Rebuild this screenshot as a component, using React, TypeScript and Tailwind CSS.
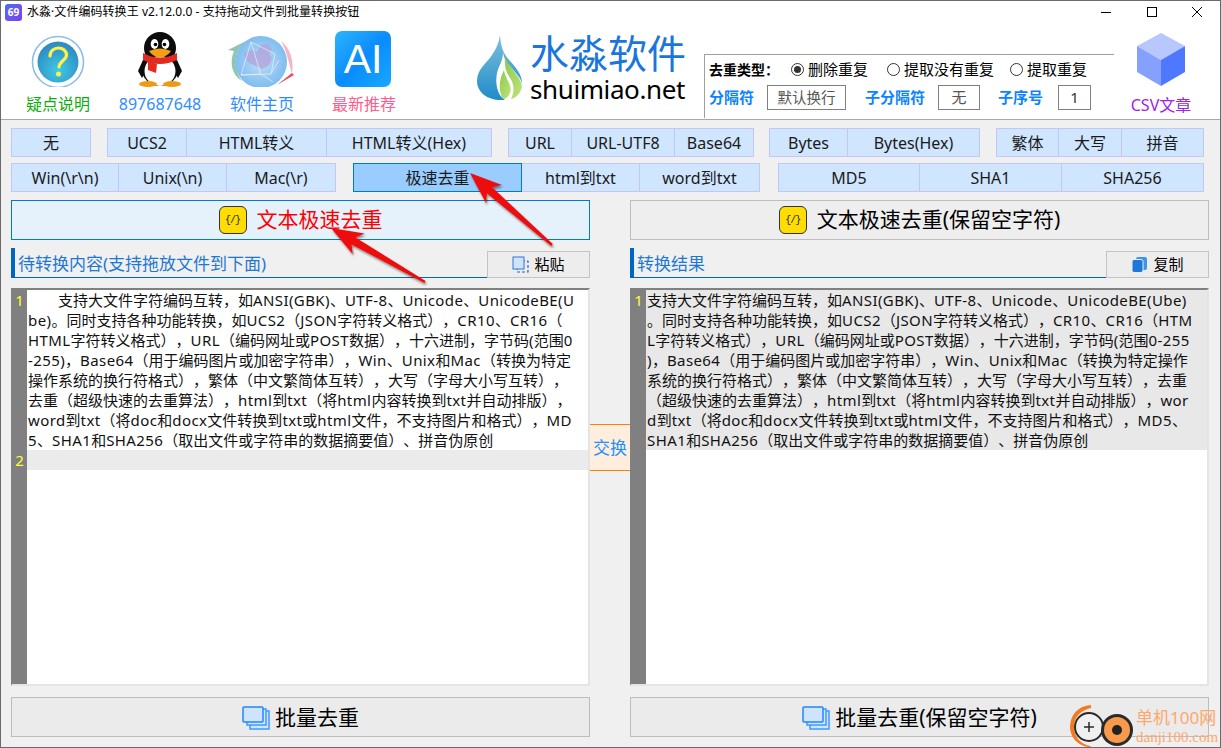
import React from "react";

const leftLines = [
  "\u3000\u3000支持大文件字符编码互转，如ANSI(GBK)、UTF-8、Unicode、UnicodeBE(U",
  "be)。同时支持各种功能转换，如UCS2（JSON字符转义格式），CR10、CR16（",
  "HTML字符转义格式），URL（编码网址或POST数据），十六进制，字节码(范围0",
  "-255)，Base64（用于编码图片或加密字符串），Win、Unix和Mac（转换为特定",
  "操作系统的换行符格式），繁体（中文繁简体互转），大写（字母大小写互转），",
  "去重（超级快速的去重算法），html到txt（将html内容转换到txt并自动排版），",
  "word到txt（将doc和docx文件转换到txt或html文件，不支持图片和格式），MD",
  "5、SHA1和SHA256（取出文件或字符串的数据摘要值）、拼音伪原创",
];
const rightLines = [
  "支持大文件字符编码互转，如ANSI(GBK)、UTF-8、Unicode、UnicodeBE(Ube)",
  "。同时支持各种功能转换，如UCS2（JSON字符转义格式），CR10、CR16（HTM",
  "L字符转义格式），URL（编码网址或POST数据），十六进制，字节码(范围0-255",
  ")，Base64（用于编码图片或加密字符串），Win、Unix和Mac（转换为特定操作",
  "系统的换行符格式），繁体（中文繁简体互转），大写（字母大小写互转），去重",
  "（超级快速的去重算法），html到txt（将html内容转换到txt并自动排版），wor",
  "d到txt（将doc和docx文件转换到txt或html文件，不支持图片和格式），MD5、",
  "SHA1和SHA256（取出文件或字符串的数据摘要值）、拼音伪原创",
];

function Line({ text }: { text: string }) {
  const parts = text.split(/([A-Za-z0-9()\-]+)/);
  return (
    <div className="whitespace-pre h-[20px]">
      {parts.map((p, i) =>
        i % 2 === 1 ? (
          <span key={i} className="tracking-[0.4px]">
            {p}
          </span>
        ) : (
          <span key={i}>{p}</span>
        )
      )}
    </div>
  );
}

function Seg({ label, w, first, active }: { label: string; w: string; first?: boolean; active?: boolean }) {
  return (
    <div
      className={`${w} ${first ? "" : "-ml-px"} ${
        active ? "relative bg-[#99ccff] border-[#0078d7]" : "bg-[#d0e6ff] border-[#c2c6ff]"
      } h-full border flex items-center justify-center text-[16px] text-[#1a1a1a] whitespace-nowrap`}
    >
      {label}
    </div>
  );
}

function HelpIcon() {
  return (
    <svg width="56" height="56" viewBox="0 0 56 56">
      <defs>
        <radialGradient id="hg" cx="50%" cy="70%" r="60%">
          <stop offset="0%" stopColor="#3fc9e4" />
          <stop offset="100%" stopColor="#2f8fc4" />
        </radialGradient>
      </defs>
      <circle cx="28" cy="31" r="25.5" fill="#fff" stroke="#8dbde6" strokeWidth="1.6" />
      <circle cx="28" cy="31" r="20.5" fill="url(#hg)" />
      <path d="M20 25c0-5 4-8 8.500-8s8 3 8 7c0 5-7 6-7.500 12" fill="none" stroke="#fff04a" strokeWidth="3.200" strokeLinecap="round" />
      <circle cx="28.500" cy="43" r="2.500" fill="#fff04a" />
    </svg>
  );
}

function QQIcon() {
  return (
    <svg width="56" height="56" viewBox="0 0 56 56">
      <ellipse cx="28" cy="17" rx="16" ry="16" fill="#0c0c0c" />
      <ellipse cx="28" cy="37" rx="18.500" ry="18" fill="#0c0c0c" />
      <path d="M11 29 L6 40 L10 47 L14 40Z M45 29 L50 40 L46 47 L42 40Z" fill="#0c0c0c" />
      <ellipse cx="28" cy="40" rx="15.500" ry="15" fill="#fff" />
      <ellipse cx="22.500" cy="13" rx="3.800" ry="5" fill="#fff" />
      <ellipse cx="33.500" cy="13" rx="3.800" ry="5" fill="#fff" />
      <circle cx="23.500" cy="13.500" r="1.800" fill="#000" />
      <circle cx="32.500" cy="13.500" r="1.800" fill="#000" />
      <path d="M17 20 Q28 15 39 20 Q35 26 28 26 Q21 26 17 20Z" fill="#f4a010" />
      <path d="M11 22 Q28 31 45 22 L45 29 Q28 37 11 29Z" fill="#e32a1f" />
      <path d="M16 30 L25 33 L24 42 L16 39Z" fill="#e32a1f" />
      <ellipse cx="16" cy="53" rx="9" ry="3" fill="#f09a10" />
      <ellipse cx="40" cy="53" rx="9" ry="3" fill="#f09a10" />
    </svg>
  );
}

function GlobeIcon() {
  return (
    <svg width="70" height="56" viewBox="0 0 70 56">
      <defs>
        <radialGradient id="gg" cx="50%" cy="50%" r="55%">
          <stop offset="0%" stopColor="#c0dcf6" />
          <stop offset="100%" stopColor="#78baf0" />
        </radialGradient>
      </defs>
      <circle cx="34" cy="31" r="26" fill="url(#gg)" />
      <path d="M18 21l7-2 5 2 4-7 7-1 4 5-3 5 3 4-3 7-7 4-6-3-7-3-5-7z" fill="#b3a4dc" opacity="0.8" />
      <path d="M24 11l24 12-4 20-30 1zM14 44l20-1 12 8M44 43l8-14M24 11l10 33" fill="none" stroke="#e6f2fc" strokeWidth="0.700" />
      <path d="M1 19L19 10 14 15C7 22 6 38 15 50 5 44 2 32 7 20Z" fill="#8cc6b0" />
      <path d="M54 10C64 18 67 30 65 43 62 33 60 20 54 10Z" fill="#f4b4c4" />
      <path d="M50 54L67 44 65 42 60 46Z" fill="#e84a60" />
    </svg>
  );
}

function AppBar({ icon, label, labelColor }: { icon: React.ReactNode; label: string; labelColor: string }) {
  return (
    <div className="w-[102px] flex flex-col items-center">
      <div className="h-[56px] mt-[8px] flex items-center justify-center">{icon}</div>
      <div className={`mt-[7px] h-[20px] leading-[20px] text-[16px] whitespace-nowrap ${labelColor}`}>{label}</div>
    </div>
  );
}

function Radio({ on }: { on?: boolean }) {
  return (
    <span className="w-[13px] h-[13px] rounded-full border border-[#333] flex items-center justify-center bg-white">
      {on ? <span className="w-[7px] h-[7px] rounded-full bg-[#333]" /> : null}
    </span>
  );
}

function CodeIcon() {
  return (
    <span className="w-[28px] h-[28px] rounded-[6px] border border-[#333] bg-[#ffdd00] flex items-center justify-center text-[10px] tracking-[-1px] text-[#222] font-['Liberation_Mono',monospace]">
      {"{/}"}
    </span>
  );
}

function StackIcon() {
  return (
    <svg width="28" height="24" viewBox="0 0 28 24">
      <rect x="8" y="5" width="19" height="18" fill="#d3e6ff" stroke="#3d9bff" strokeWidth="1.500" />
      <rect x="5" y="3" width="19" height="16" fill="#d3e6ff" stroke="#3d9bff" strokeWidth="1.500" />
      <rect x="1" y="1" width="20" height="15" rx="1" fill="#cfe3ff" stroke="#1e88ff" strokeWidth="1.500" />
    </svg>
  );
}

function Editor({ lines, left }: { lines: string[]; left?: boolean }) {
  return (
    <div className="w-[579px] h-[398px] border-t-2 border-l border-r-2 border-b-2 border-t-[#808080] border-l-[#808080] border-r-[#e4e4e4] border-b-[#e4e4e4] bg-white flex overflow-hidden">
      <div className="w-[15px] shrink-0 bg-[#808080] text-[#ffff33] text-[15px] leading-[20px] text-center">
        <div>1</div>
        {left ? <div className="mt-[140px]">2</div> : null}
      </div>
      <div className="flex-1 min-w-0 text-[15px] leading-[20px] text-[#111]">
        <div className={left ? "pl-px" : "pl-px bg-[#e8e8e8]"}>
          {lines.map((l) => (
            <Line key={l} text={l} />
          ))}
        </div>
        {left ? <div className="h-[20px] bg-[#ebebeb]" /> : null}
      </div>
    </div>
  );
}

function arrow(tx: number, ty: number, bx: number, by: number) {
  const len = Math.hypot(bx - tx, by - ty);
  const dx = (bx - tx) / len;
  const dy = (by - ty) / len;
  const px = -dy;
  const py = dx;
  const pts: [number, number][] = [
    [tx, ty],
    [tx + dx * 32 + px * 12, ty + dy * 32 + py * 12],
    [tx + dx * 26 + px * 4, ty + dy * 26 + py * 4],
    [bx + px * 1.2, by + py * 1.2],
    [bx - px * 1.2, by - py * 1.2],
    [tx + dx * 26 - px * 4, ty + dy * 26 - py * 4],
    [tx + dx * 32 - px * 12, ty + dy * 32 - py * 12],
  ];
  return pts.map((p) => p.join(",")).join(" ");
}

export default function App() {
  return (
    <div className="relative w-[1221px] h-[748px] overflow-hidden border border-[#6a6a6a] bg-[#f0f0f0] flex flex-col font-['Noto_Sans','Noto_Sans_CJK_SC',sans-serif] text-black [text-spacing-trim:space-all]">
      {/* title + header */}
      <div className="h-[118px] shrink-0 bg-white border-b border-[#a8a8a8] flex flex-col box-content -mb-px">
        <div className="h-[22px] shrink-0 flex items-center pl-[4px]">
          <span className="w-[17px] h-[17px] rounded-[3px] bg-gradient-to-br from-[#4a6cf0] to-[#7a3df0] text-white text-[10px] leading-[17px] text-center font-bold">
            69
          </span>
          <span className="ml-[5px] text-[12px] whitespace-nowrap tracking-[0.05px]">水淼·文件编码转换王 v2.12.0.0 - 支持拖动文件到批量转换按钮</span>
          <div className="ml-auto flex items-center">
            <svg width="12" height="12" viewBox="0 0 12 12" className="mr-[34px]">
              <path d="M1 6.500H11" stroke="#000" strokeWidth="1" />
            </svg>
            <svg width="12" height="12" viewBox="0 0 12 12" className="mr-[33px]">
              <rect x="1.500" y="1.500" width="9" height="9" fill="none" stroke="#000" strokeWidth="1" />
            </svg>
            <svg width="12" height="12" viewBox="0 0 12 12" className="mr-[17px]">
              <path d="M1 1L11 11M11 1L1 11" stroke="#000" strokeWidth="1" />
            </svg>
          </div>
        </div>
        <div className="flex-1 flex pl-[6px]">
          <AppBar icon={<HelpIcon />} label="疑点说明" labelColor="text-[#0cae0c]" />
          <AppBar icon={<QQIcon />} label="897687648" labelColor="text-[#2f8dff]" />
          <AppBar icon={<GlobeIcon />} label="软件主页" labelColor="text-[#2f8dff]" />
          <AppBar
            icon={
              <div className="w-[56px] h-[56px] mr-[2px] rounded-[7px] bg-gradient-to-br from-[#2db4f8] via-[#0a8cff] to-[#1aa8fa] flex items-center justify-center text-white text-[41px] leading-none font-['Liberation_Sans',sans-serif]">
                AI
              </div>
            }
            label="最新推荐"
            labelColor="text-[#ff5c8a]"
          />
          <svg width="46" height="66" viewBox="0 0 46 66" className="ml-[62px] mt-[12px] shrink-0">
            <defs>
              <linearGradient id="db" x1="0" y1="0" x2="0" y2="1">
                <stop offset="0%" stopColor="#7cc0dc" />
                <stop offset="100%" stopColor="#1f8cc8" />
              </linearGradient>
              <linearGradient id="dg" x1="0" y1="0" x2="1" y2="1">
                <stop offset="0%" stopColor="#8cc84c" />
                <stop offset="100%" stopColor="#c0e47c" />
              </linearGradient>
            </defs>
            <path d="M23 0C24 14 27 19 33 26 40 33 46 42 45 50 44 59 35 65 24 65 10 65 0 57 0 46 0 34 10 28 15 20 19 14 22 8 23 0Z" fill="url(#db)" />
            <path d="M26 17C27 26 33 31 38 37 43 43 46 47 45 52 44 60 36 65 28 65 20 60 18 48 20 38 22 30 26 26 26 17Z" fill="#fff" />
            <path d="M28 20C29 28 34 32 39 39 44 46 46 50 44 55 42 60 38 63 34 64 38 56 37 49 33 43 30 38 27 34 28 20Z" fill="url(#dg)" />
            <path d="M27 35C28 44 36 50 33 58 31 62 29 64 26 64 22 58 21 46 27 35Z" fill="url(#dg)" />
          </svg>
          <div className="ml-[7px] mt-[8px] w-[158px] shrink-0">
            <div className="text-[39px] leading-[44px] text-[#1b76dc] whitespace-nowrap">水淼软件</div>
            <div className="text-[26px] leading-[28px] whitespace-nowrap tracking-[-0.4px]">shuimiao.net</div>
          </div>
          <div className="ml-[16px] mt-[31px] w-[410px] h-[64px] shrink-0 border-t border-l border-[#a0a0a0] pl-[4px] pt-[4px]">
            <div className="h-[21px] flex items-center text-[15px] whitespace-nowrap">
              <span className="w-[82px] font-bold text-[14px]">去重类型：</span>
              <Radio on />
              <span className="ml-[4px] w-[79px]">删除重复</span>
              <Radio />
              <span className="ml-[4px] w-[106px]">提取没有重复</span>
              <Radio />
              <span className="ml-[4px]">提取重复</span>
            </div>
            <div className="mt-[5px] h-[25px] flex items-center text-[15px] whitespace-nowrap">
              <span className="w-[58px] font-bold text-[#0a84ff]">分隔符</span>
              <span className="w-[79px] h-[25px] border border-[#808080] flex items-center justify-center text-[#555] text-[14.5px]">默认换行</span>
              <span className="ml-[19px] w-[73px] font-bold text-[#0a84ff]">子分隔符</span>
              <span className="w-[42px] h-[25px] border border-[#808080] flex items-center justify-center text-[#555]">无</span>
              <span className="ml-[18px] w-[60px] font-bold text-[#0a84ff]">子序号</span>
              <span className="w-[33px] h-[25px] border border-[#808080] flex items-center justify-center text-[#333]">1</span>
            </div>
          </div>
          <div className="ml-[12px] w-[70px] shrink-0 flex flex-col items-center">
            <svg width="50" height="54" viewBox="0 0 50 54" className="mt-[10px]">
              <path d="M25 0L49 13 25 27 1 13Z" fill="#b8c8ff" />
              <path d="M1 13L25 27V53L1 39Z" fill="#86a0ff" />
              <path d="M49 13L25 27V53L49 39Z" fill="#4e78ff" />
            </svg>
            <div className="mt-[8px] text-[16px] leading-[20px] text-[#a020f0] whitespace-nowrap">CSV文章</div>
          </div>
        </div>
      </div>

      {/* body */}
      <div className="flex-1 flex flex-col pl-[10px] pt-[9px]">
        <div className="h-[29px] flex">
          <div className="h-full flex">
            <Seg label="无" w="w-[80px]" first />
          </div>
          <div className="ml-[16px] h-full flex">
            <Seg label="UCS2" w="w-[80px]" first />
            <Seg label="HTML转义" w="w-[141px]" />
            <Seg label="HTML转义(Hex)" w="w-[166px]" />
          </div>
          <div className="ml-[16px] h-full flex">
            <Seg label="URL" w="w-[64px]" first />
            <Seg label="URL-UTF8" w="w-[104px]" />
            <Seg label="Base64" w="w-[80px]" />
          </div>
          <div className="ml-[15px] h-full flex">
            <Seg label="Bytes" w="w-[79px]" first />
            <Seg label="Bytes(Hex)" w="w-[133px]" />
          </div>
          <div className="ml-[16px] h-full flex">
            <Seg label="繁体" w="w-[63px]" first />
            <Seg label="大写" w="w-[64px]" />
            <Seg label="拼音" w="w-[83px]" />
          </div>
        </div>
        <div className="mt-[6px] h-[29px] flex">
          <div className="h-full flex">
            <Seg label="Win(\r\n)" w="w-[108px]" first />
            <Seg label="Unix(\n)" w="w-[109px]" />
            <Seg label="Mac(\r)" w="w-[110px]" />
          </div>
          <div className="ml-[17px] h-full flex">
            <Seg label="极速去重" w="w-[169px]" first active />
            <Seg label="html到txt" w="w-[119px]" />
            <Seg label="word到txt" w="w-[121px]" />
          </div>
          <div className="ml-[18px] h-full flex">
            <Seg label="MD5" w="w-[142px]" first />
            <Seg label="SHA1" w="w-[143px]" />
            <Seg label="SHA256" w="w-[143px]" />
          </div>
        </div>

        <div className="mt-[8px] flex gap-[40px]">
          <div className="w-[579px] h-[40px] border border-[#0078d7] bg-[#e5f1fb] flex items-center justify-center gap-[10px] text-[21px] text-[#ff0000]">
            <CodeIcon />
            <span>文本极速去重</span>
          </div>
          <div className="w-[579px] h-[40px] border border-[#bdbdbd] bg-[#eeeeee] flex items-center justify-center gap-[10px] text-[21px]">
            <CodeIcon />
            <span>文本极速去重(保留空字符)</span>
          </div>
        </div>

        <div className="mt-[8px] flex gap-[40px]">
          <div className="w-[579px] h-[30px] flex items-stretch">
            <div className="flex-1 border-l-4 border-b border-[#0066c4] pl-[3px] text-[17px] leading-[31px] text-[#1e78d2] whitespace-nowrap">
              待转换内容(支持拖放文件到下面)
            </div>
            <div className="w-[103px] mt-[3px] border border-[#c4c4c4] bg-[#ededed] flex items-center justify-center gap-[5px] text-[15px]">
              <svg width="17" height="17" viewBox="0 0 17 17">
                <rect x="5" y="5" width="11" height="11" fill="none" stroke="#2f5fc8" strokeWidth="1.200" strokeDasharray="3 2" />
                <rect x="1" y="1" width="11" height="12" fill="#cfe3ff" stroke="#2f78d8" strokeWidth="1" />
              </svg>
              <span>粘贴</span>
            </div>
          </div>
          <div className="w-[579px] h-[30px] flex items-stretch">
            <div className="flex-1 border-l-4 border-b border-[#0066c4] pl-[3px] text-[17px] leading-[31px] text-[#1e78d2] whitespace-nowrap">
              转换结果
            </div>
            <div className="w-[103px] mt-[3px] border border-[#c4c4c4] bg-[#ededed] flex items-center justify-center gap-[5px] text-[15px]">
              <svg width="17" height="17" viewBox="0 0 17 17">
                <rect x="5" y="1" width="11" height="13" rx="2" fill="#3a96ea" />
                <rect x="1" y="3.500" width="11" height="13" rx="2" fill="#1f78d8" stroke="#ededed" strokeWidth="1" />
              </svg>
              <span>复制</span>
            </div>
          </div>
        </div>

        <div className="mt-[10px] flex">
          <Editor lines={leftLines} left />
          <div className="w-[40px] h-[47px] mt-[136px] border-t border-b border-[#ff8000] bg-[#ffeedd] text-[#1e90ff] text-[17px] flex items-center justify-center whitespace-nowrap">
            交换
          </div>
          <Editor lines={rightLines} />
        </div>

        <div className="mt-[11px] flex gap-[40px]">
          <div className="w-[579px] h-[40px] pt-px border border-[#bdbdbd] bg-[#ebebeb] flex items-center justify-center gap-[5px] text-[21px]">
            <StackIcon />
            <span>批量去重</span>
          </div>
          <div className="w-[579px] h-[40px] pt-px border border-[#bdbdbd] bg-[#ebebeb] flex items-center justify-center gap-[5px] text-[21px]">
            <StackIcon />
            <span>批量去重(保留空字符)</span>
          </div>
        </div>
      </div>

      {/* annotation arrows */}
      <svg width="1221" height="748" viewBox="0 0 1221 748" className="absolute left-[-1px] top-[-1px] pointer-events-none">
        <defs>
          <filter id="sh" x="-20%" y="-20%" width="140%" height="140%">
            <feDropShadow dx="1" dy="2" stdDeviation="1.200" floodColor="#000" floodOpacity="0.450" />
          </filter>
        </defs>
        <polygon points={arrow(470, 173, 552, 245)} fill="#ee1111" filter="url(#sh)" />
        <polygon points={arrow(331, 228, 425, 282)} fill="#ee1111" filter="url(#sh)" />
      </svg>

      {/* watermark */}
      <div className="absolute right-[1px] bottom-[-1px] w-[150px] h-[44px] flex items-end">
        <svg width="66" height="44" viewBox="0 0 66 44" className="shrink-0">
          <path d="M22 1C8 2 1 12 1 23c0 10 8 19 18 20 3 1 4 0 2-1C11 40 5 32 5 23 5 13 12 6 22 4z" fill="#f57a1f" />
          <circle cx="20" cy="23" r="14" fill="#f0f0f0" stroke="#2a2a2a" strokeWidth="2" />
          <path d="M15 23H25M20 18V28" stroke="#2a2a2a" strokeWidth="1.500" />
          <circle cx="48" cy="26" r="16" fill="#2a2a2a" />
          <circle cx="48" cy="26" r="13" fill="#f89a4c" />
          <circle cx="48" cy="26" r="5" fill="#222" />
        </svg>
        <div className="ml-[1px] pb-[3px] text-[#ffa76c] whitespace-nowrap">
          <div className="text-[17px] leading-[22px]">单机100网</div>
          <div className="text-[15px] leading-[16px] font-['Liberation_Serif',serif]">danji100.com</div>
        </div>
      </div>
    </div>
  );
}
